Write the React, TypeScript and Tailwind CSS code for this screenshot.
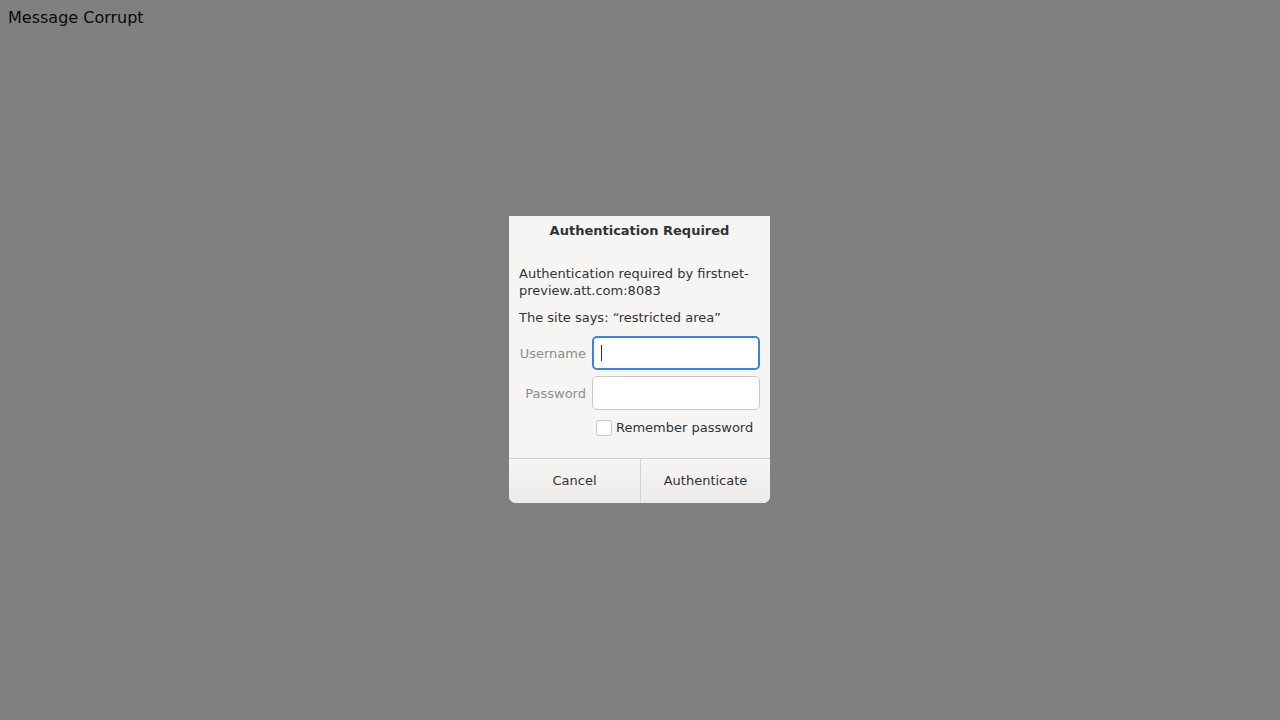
const font = { fontFamily: '"DejaVu Sans", sans-serif' };

const Field = ({ label, focused }: { label: string; focused?: boolean }) => (
  <div className="flex items-center">
    <span className="w-[67px] text-right text-[13px] leading-[17px] text-[#8b8e8f]">{label}</span>
    <div
      className={`ml-[6px] h-[34px] w-[168px] rounded-[5px] bg-white flex items-center ${
        focused ? 'border-2 border-[#3584e4] pl-[7px]' : 'border border-[#cdc7c2] pl-[8px]'
      }`}
    >
      {focused && <div className="h-[16px] w-px bg-[#2e3436]"></div>}
    </div>
  </div>
);

export default function App() {
  return (
    <div className="relative h-[720px] w-[1280px] bg-[#808080]" style={font}>
      <div className="absolute left-[8px] top-[8px] text-[16px] leading-[20px] text-[#0a0a0a]">Message Corrupt</div>

      {/* dialog */}
      <div className="absolute left-[509px] top-[216px] w-[261px] rounded-b-[7px] bg-[#f6f5f4] text-[#2e3436]">
        <div className="pt-[6px] text-center text-[13px] font-bold leading-[17px]">Authentication Required</div>
        <div className="px-[10px]">
          <p className="mt-[26px] text-[13px] leading-[17px]">
            Authentication required by firstnet-
            <br />
            preview.att.com:8083
          </p>
          <p className="mt-[10px] text-[13px] leading-[17px]">The site says: “restricted area”</p>
          <div className="mt-[10px] flex flex-col gap-[6px]">
            <Field label="Username" focused />
            <Field label="Password" />
          </div>
          <label className="mt-[9px] ml-[77px] flex items-center gap-[4px]">
            <span className="h-[16px] w-[16px] rounded-[3px] border border-[#cdc7c2] bg-white"></span>
            <span className="text-[13px] leading-[17px]">Remember password</span>
          </label>
        </div>
        <div className="mt-[22px] flex h-[45px] border-t border-[#d5d0cc]">
          <button className="flex-1 rounded-bl-[7px] bg-gradient-to-b from-[#f6f5f4] to-[#edebe9] text-[13px]" style={font}>
            Cancel
          </button>
          <div className="w-px bg-[#d5d0cc]"></div>
          <button className="w-[129px] rounded-br-[7px] bg-gradient-to-b from-[#f6f5f4] to-[#edebe9] text-[13px]" style={font}>
            Authenticate
          </button>
        </div>
      </div>
    </div>
  );
}
